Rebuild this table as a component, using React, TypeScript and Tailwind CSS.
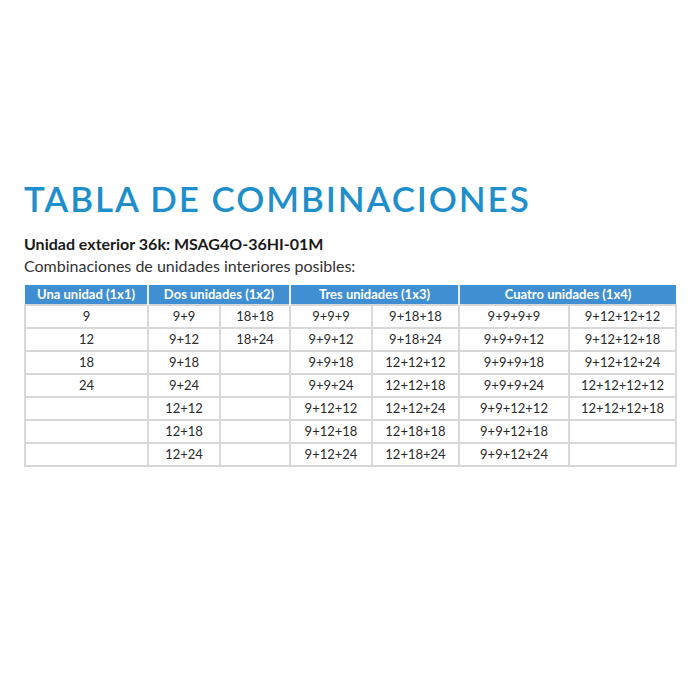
const rows: string[][] = [
  ["9", "9+9", "18+18", "9+9+9", "9+18+18", "9+9+9+9", "9+12+12+12"],
  ["12", "9+12", "18+24", "9+9+12", "9+18+24", "9+9+9+12", "9+12+12+18"],
  ["18", "9+18", "", "9+9+18", "12+12+12", "9+9+9+18", "9+12+12+24"],
  ["24", "9+24", "", "9+9+24", "12+12+18", "9+9+9+24", "12+12+12+12"],
  ["", "12+12", "", "9+12+12", "12+12+24", "9+9+12+12", "12+12+12+18"],
  ["", "12+18", "", "9+12+18", "12+18+18", "9+9+12+18", ""],
  ["", "12+24", "", "9+12+24", "12+18+24", "9+9+12+24", ""],
];

const widths = [123, 72, 70, 82, 87, 110, 107];

export default function App() {
  return (
    <div className="w-[700px] h-[700px] bg-white font-['Lato',sans-serif] text-[#222]">
      <div className="pt-[176px] pl-[24px]">
        <h1 className="text-[35px] leading-[44px] font-semibold tracking-[1.9px] text-[#1f8fcb]">
          TABLA DE COMBINACIONES
        </h1>
        <p className="mt-[14px] text-[16px] leading-[20px] font-bold text-[#1a1a1a]">
          Unidad exterior 36k: MSAG4O-36HI-01M
        </p>
        <p className="mt-[2px] text-[16px] leading-[20px] text-[#333]">
          Combinaciones de unidades interiores posibles:
        </p>
        <table className="mt-[9px] border-collapse table-fixed text-[13px]">
          <colgroup>
            {widths.map((w, i) => (
              <col key={i} style={{ width: w }} />
            ))}
          </colgroup>
          <thead>
            <tr className="h-[19px] bg-[#3f8fd2] text-white font-bold">
              <th className="border-x-2 border-x-[#e6eef6] first:border-l-0 font-bold p-0 leading-[19px]">Una unidad (1x1)</th>
              <th colSpan={2} className="border-x-2 border-x-[#e6eef6] font-bold p-0 leading-[19px]">Dos unidades (1x2)</th>
              <th colSpan={2} className="border-x-2 border-x-[#e6eef6] font-bold p-0 leading-[19px]">Tres unidades (1x3)</th>
              <th colSpan={2} className="border-x-2 border-x-[#e6eef6] border-r-0 font-bold p-0 leading-[19px]">Cuatro unidades (1x4)</th>
            </tr>
          </thead>
          <tbody>
            {rows.map((r, i) => (
              <tr key={i} className="h-[23px]">
                {r.map((c, j) => (
                  <td key={j} className="border-2 border-[#d8d8d8] text-center p-0 leading-[19px] text-[#2a2a2a]">
                    {c}
                  </td>
                ))}
              </tr>
            ))}
          </tbody>
        </table>
      </div>
    </div>
  );
}
